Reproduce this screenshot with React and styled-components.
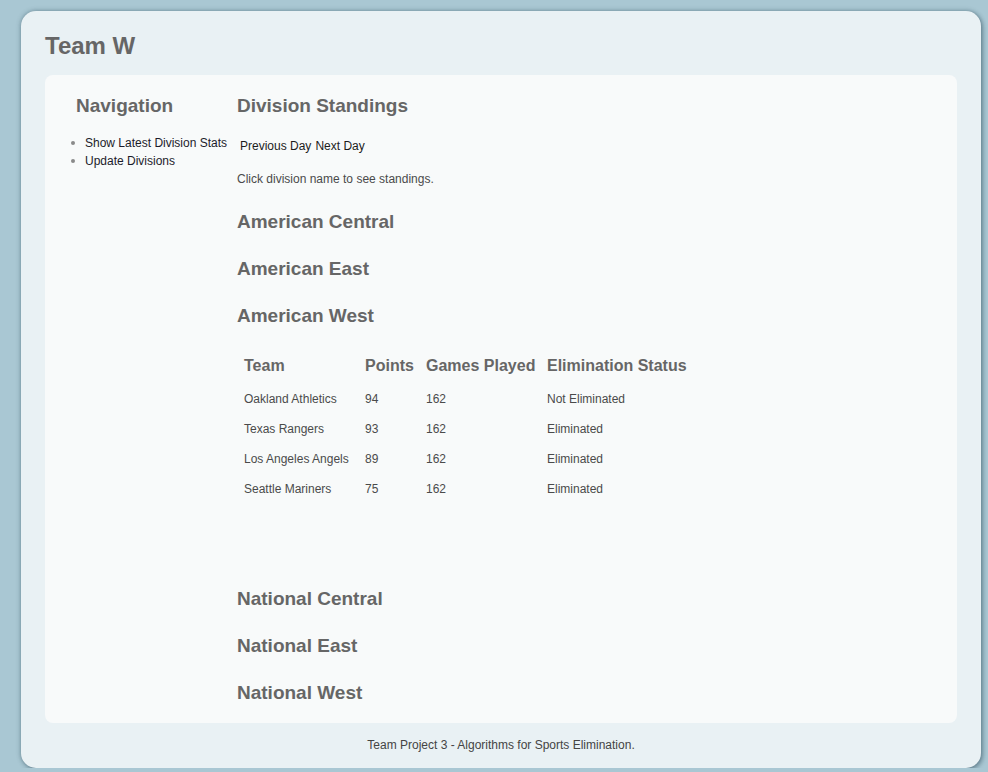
import React from "react";
import styled, { createGlobalStyle } from "styled-components";

const GlobalStyle = createGlobalStyle`
  html, body {
    margin: 0;
    padding: 0;
    background: #a9c7d3;
  }
  body {
    font-family: "Liberation Sans", Arial, Helvetica, sans-serif;
    font-size: 12px;
    color: #444;
  }
`;

const Card = styled.div`
  box-sizing: border-box;
  width: 960px;
  margin: 11px 0 0 21px;
  padding: 21px 24px 14.5px;
  border-radius: 15px;
  background: #e9f1f4;
  box-shadow: 0 0 5px rgba(40, 70, 85, 0.45), 2px 2px 4px rgba(40, 70, 85, 0.35);
`;

const SiteTitle = styled.h1`
  margin: 0 0 15px;
  font: bold 24px/28px "Liberation Sans", Arial, sans-serif;
  color: #666;
`;

const Panel = styled.div`
  display: flex;
  padding: 19px 0;
  border-radius: 8px;
  background: #f8fafa;
`;

const NavColumn = styled.nav`
  flex: 0 0 192px;
`;

const Heading = styled.h2`
  margin: 0 0 0 ${(p) => p.$indent || 0}px;
  font: bold 19px/23px "Liberation Sans", Arial, sans-serif;
  color: #666;
`;

const NavList = styled.ul`
  list-style: none;
  margin: 17px 0 0;
  padding: 0 0 0 26px;
`;

const NavItem = styled.li`
  display: flex;
  align-items: center;
  gap: 10px;
  font-size: 12px;
  line-height: 18px;
  color: #1c1c2a;
  white-space: nowrap;
  &::before {
    content: "";
    width: 4px;
    height: 4px;
    border-radius: 50%;
    background: #8a8a8a;
    flex: 0 0 4px;
  }
`;

const MainColumn = styled.main`
  flex: 1;
`;

const DayNav = styled.div`
  display: flex;
  gap: 4px;
  margin-top: 20px;
  padding-left: 3px;
  font-size: 12px;
  line-height: 18px;
  color: #1c1c1c;
`;

const Hint = styled.p`
  margin: 15px 0 0;
  font-size: 12px;
  line-height: 18px;
  color: #4a4a4a;
`;

const DivisionList = styled.div`
  display: flex;
  flex-direction: column;
  align-items: flex-start;
  gap: 24px;
  margin-top: 21.6px;
`;

const Standings = styled.table`
  border-collapse: collapse;
  margin-bottom: 59px;
  table-layout: fixed;
  width: 463px;
`;

const HeadCell = styled.th`
  box-sizing: border-box;
  width: ${(p) => p.$w}px;
  padding: 6px 7px 9.5px;
  text-align: left;
  font: bold 16px/18px "Liberation Sans", Arial, sans-serif;
  color: #666;
  white-space: nowrap;
`;

const Cell = styled.td`
  padding: 6px 7px;
  font-size: 12px;
  line-height: 18px;
  color: #4a4a4a;
  white-space: nowrap;
`;

const Footer = styled.footer`
  margin-top: 12.5px;
  text-align: center;
  font-size: 12px;
  line-height: 18px;
  color: #444;
`;

const columns = [
  { label: "Team", w: 121 },
  { label: "Points", w: 61 },
  { label: "Games Played", w: 121 },
  { label: "Elimination Status", w: 160 },
];

const rows = [
  ["Oakland Athletics", "94", "162", "Not Eliminated"],
  ["Texas Rangers", "93", "162", "Eliminated"],
  ["Los Angeles Angels", "89", "162", "Eliminated"],
  ["Seattle Mariners", "75", "162", "Eliminated"],
];

export default function App() {
  return (
    <>
      <GlobalStyle />
      <Card>
        <SiteTitle>Team W</SiteTitle>
        <Panel>
          <NavColumn>
            <Heading $indent={31}>Navigation</Heading>
            <NavList>
              <NavItem>Show Latest Division Stats</NavItem>
              <NavItem>Update Divisions</NavItem>
            </NavList>
          </NavColumn>
          <MainColumn>
            <Heading>Division Standings</Heading>
            <DayNav>
              <span>Previous Day</span>
              <span>Next Day</span>
            </DayNav>
            <Hint>Click division name to see standings.</Hint>
            <DivisionList>
              <Heading>American Central</Heading>
              <Heading>American East</Heading>
              <Heading>American West</Heading>
              <Standings>
                <thead>
                  <tr>
                    {columns.map((c) => (
                      <HeadCell key={c.label} $w={c.w}>
                        {c.label}
                      </HeadCell>
                    ))}
                  </tr>
                </thead>
                <tbody>
                  {rows.map((r) => (
                    <tr key={r[0]}>
                      {r.map((v, i) => (
                        <Cell key={i}>{v}</Cell>
                      ))}
                    </tr>
                  ))}
                </tbody>
              </Standings>
              <Heading>National Central</Heading>
              <Heading>National East</Heading>
              <Heading>National West</Heading>
            </DivisionList>
          </MainColumn>
        </Panel>
        <Footer>Team Project 3 - Algorithms for Sports Elimination.</Footer>
      </Card>
    </>
  );
}
